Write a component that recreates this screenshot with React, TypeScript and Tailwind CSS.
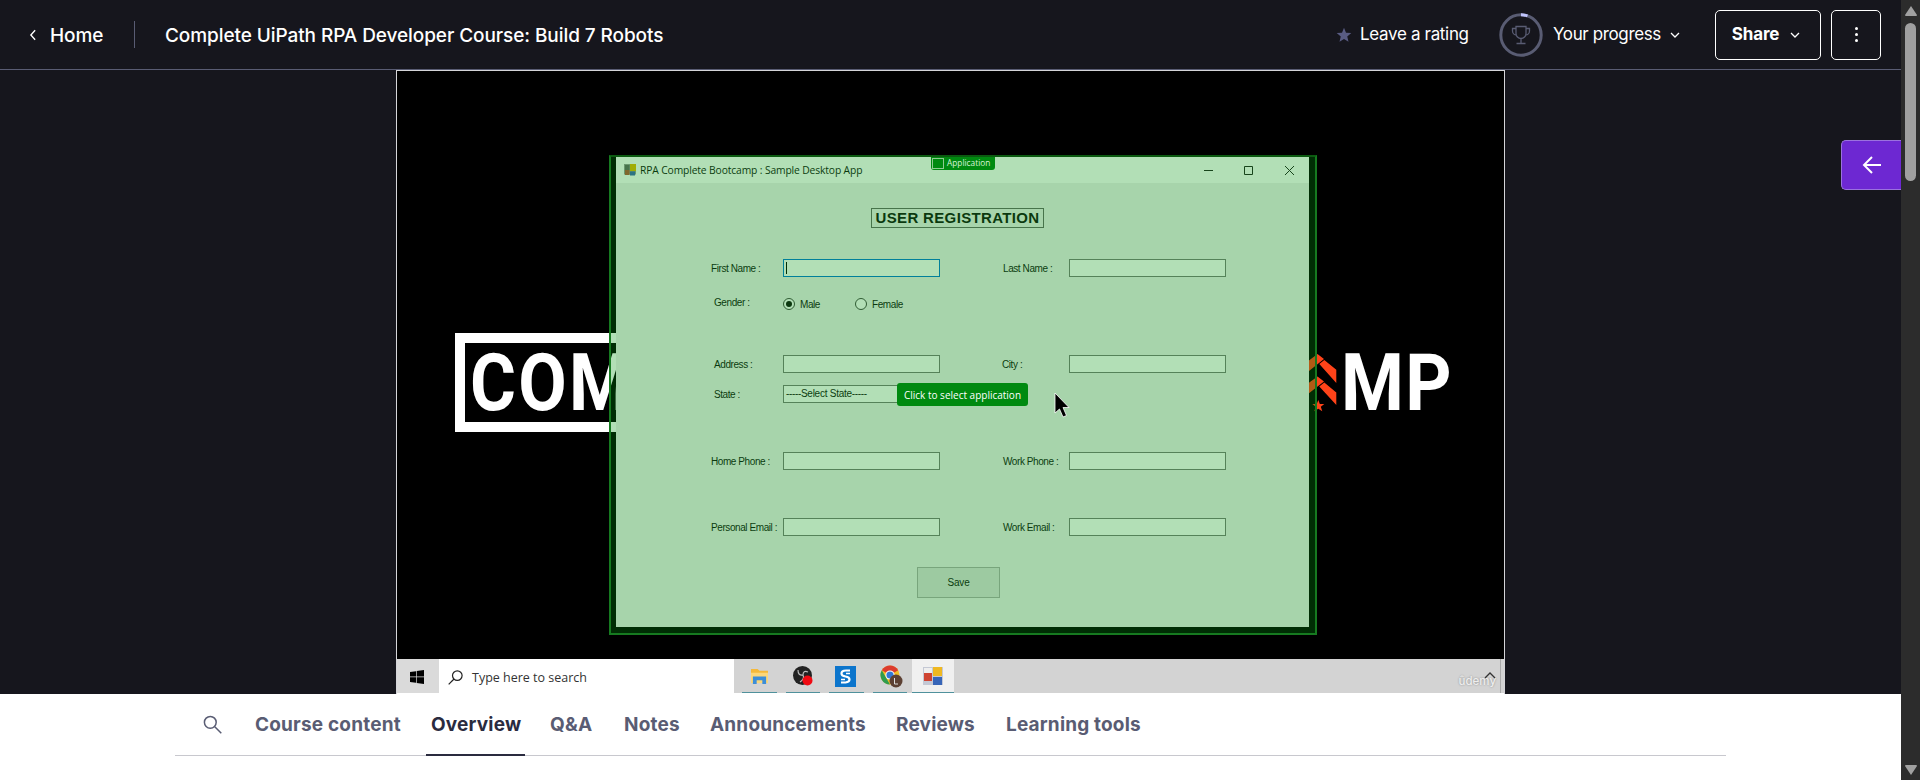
import React from "react";

const ui = "font-['Inter','Liberation_Sans',sans-serif]";

function Chevron({ className }: { className?: string }) {
  return (
    <svg viewBox="0 0 10 10" className={className} fill="none" stroke="currentColor" strokeWidth="1.3">
      <path d="M1 3l4 4 4-4" />
    </svg>
  );
}

function Header() {
  return (
    <header className="flex h-[70px] shrink-0 items-center border-b border-[#595c73] text-[18px] font-medium whitespace-nowrap text-white">
      <svg viewBox="0 0 10 14" className="ml-7 h-3 w-2.5 shrink-0" fill="none" stroke="currentColor" strokeWidth="1.6">
        <path d="M7.5 1.5L2.500 7l5 5.500" />
      </svg>
      <span className="ml-3 w-[54px] pt-[3px] text-[19px] tracking-[-0.05px]">Home</span>
      <div className="ml-[30px] h-[27px] w-px bg-[#595c73]" />
      <h1 className="ml-[30px] pt-[3px] text-[19px] tracking-[-0.080px]">Complete UiPath RPA Developer Course: Build 7 Robots</h1>
      <div className="ml-auto flex items-center pr-5">
        <svg viewBox="0 0 16 16" className="mr-2 h-4 w-4" fill="#595c83">
          <path d="M8 .8l2 4.900 5.300.4-4.050 3.400L12.500 14.700 8 11.900l-4.500 2.800 1.250-5.200L.7 6.100l5.300-.4z" />
        </svg>
        <span className="w-[109px] text-[17px] font-normal tracking-[-0.33px]">Leave a rating</span>
        <svg viewBox="0 0 44 44" className="ml-[30px] h-11 w-11" fill="none">
          <circle cx="22" cy="22" r="20.200" stroke="#595c73" strokeWidth="3" />
          <path d="M22 1.800a20.200 20.200 0 0 1 6.500 1.100" stroke="#c0c4fc" strokeWidth="3" />
          <g stroke="#595c73" strokeWidth="1.300">
            <path d="M17 13.500h10v7a5 5 0 0 1-10 0zM17 15.500h-3.500v2.500a4 4 0 0 0 4 4M27 15.500h3.500v2.500a4 4 0 0 1-4 4M22 25.500v4.500M17.500 30.500h9" />
          </g>
        </svg>
        <span className="ml-2.5 w-[108px] text-[17px] font-normal tracking-[-0.38px]">Your progress</span>
        <Chevron className="ml-[9px] h-2.5 w-2.5" />
        <button className="ml-[35px] flex h-[50px] w-[106px] items-center rounded-[5px] border border-white pl-[14px] text-[17px] font-bold">
          <span className="w-[51px] tracking-[-0.1px]">Share</span>
          <Chevron className="ml-[9px] h-2.5 w-2.5" />
        </button>
        <button className="ml-2.5 flex h-[50px] w-[50px] flex-col items-center justify-center gap-[3px] rounded-[5px] border border-white">
          <i className="h-[3px] w-[3px] rounded-full bg-white" />
          <i className="h-[3px] w-[3px] rounded-full bg-white" />
          <i className="h-[3px] w-[3px] rounded-full bg-white" />
        </button>
      </div>
    </header>
  );
}

function Label({ children, className }: { children: React.ReactNode; className: string }) {
  return <span className={`shrink-0 whitespace-nowrap pt-px text-[10px] tracking-[-0.420px] ${className}`}>{children}</span>;
}

const field = "h-[18px] w-[157px] shrink-0 border bg-white";

function Row({ left, right, className, inset, rightInset, focused }: { left: string; right?: string; className: string; inset?: boolean; rightInset?: boolean; focused?: boolean }) {
  return (
    <div className={`flex h-[18px] items-center pl-[95px] ${className}`}>
      <Label className={inset ? "w-[72px] pl-[3px]" : "w-[72px]"}>{left}</Label>
      <div className={`${field} ${focused ? "border-[#0078d7]" : "border-[#7a7a7a]"} flex items-center pl-0.5`}>
        {focused && <i className="h-3 w-px bg-black" />}
      </div>
      {right && (
        <>
          <Label className={rightInset ? "ml-[62px] w-[67px]" : "ml-[63px] w-[66px]"}>{right}</Label>
          <div className={`${field} border-[#7a7a7a]`} />
        </>
      )}
    </div>
  );
}

function AppWindow() {
  return (
    <div className="absolute top-[84px] left-[212px] h-[479px] w-[708px] pt-0.5 pl-[7px]">
      <div className="h-[470px] w-[693px] bg-[#f0f0f0] font-['Liberation_Sans',Arial,sans-serif] font-normal text-[#111]">
        <div className="flex h-[26px] items-center bg-white pb-px pl-2">
          <svg viewBox="0 0 12 12" className="h-3 w-3 shrink-0">
            <rect width="12" height="10.500" fill="#999" />
            <rect x="1" y="1" width="4.500" height="5" fill="#666" />
            <rect x="6" width="6" height="7" fill="#e5b800" />
            <rect x="1" y="6" width="4.500" height="5" fill="#b8553b" />
            <rect x="6" y="7.500" width="5" height="4" fill="#3f66b5" />
          </svg>
          <span className="ml-1 pt-0.5 font-['Open_Sans',sans-serif] text-[10.300px] whitespace-nowrap tracking-[-0.130px]">RPA Complete Bootcamp : Sample Desktop App</span>
          <svg viewBox="0 0 92 12" className="mr-[14px] ml-auto h-3 w-[92px]" fill="none" stroke="#222" strokeWidth="1">
            <path d="M1 6.500h9M41.500 2.500h8v8h-8zM82 2l9 9M91 2l-9 9" />
          </svg>
        </div>
        <h2 className="mt-[25px] ml-[255px] flex h-5 w-[173px] items-center justify-center border border-[#666] text-[15px] leading-[18px] font-bold whitespace-nowrap tracking-[0.350px]">USER REGISTRATION</h2>
        <Row left="First Name :" right="Last Name :" className="mt-[31px]" focused />
        <div className="mt-[18px] flex h-[18px] items-center pl-[98px]">
          <Label className="w-[69px] pb-[3px]">Gender :</Label>
          <i className="flex h-3 w-3 items-center justify-center rounded-full border border-[#444] bg-white">
            <i className="h-1.5 w-1.5 rounded-full bg-[#111]" />
          </i>
          <Label className="ml-[5px] w-[55px]">Male</Label>
          <i className="h-3 w-3 rounded-full border border-[#444] bg-white" />
          <Label className="ml-[5px]">Female</Label>
        </div>
        <Row left="Address :" right="City :" className="mt-[42px]" inset rightInset />
        <div className="mt-3 flex h-[18px] items-center pl-[95px]">
          <Label className="w-[72px] pl-[3px]">State :</Label>
          <div className={`${field} flex items-center border-[#7a7a7a] bg-[#f0f0f0] pl-0.5 text-[10px]`}>
            <span className="tracking-[-0.350px]">-----</span>
            <span className="tracking-[-0.250px]">Select State</span>
            <span className="tracking-[-0.350px]">-----</span>
          </div>
        </div>
        <Row left="Home Phone :" right="Work Phone :" className="mt-[49px]" />
        <Row left="Personal Email :" right="Work Email :" className="mt-12" />
        <button className="mt-[31px] ml-[301px] flex h-[31px] w-[83px] items-center justify-center border border-[#adadad] bg-[#e1e1e1] text-[10px] tracking-[-0.2px]">Save</button>
      </div>
    </div>
  );
}

function Selection() {
  return (
    <>
      <div className="absolute top-[84px] left-[212px] h-[480px] w-[708px] border-2 border-[#167a20] border-t-[#0b5a10] bg-[#00940c]/30" />
      <div className="absolute top-[86px] left-[534px] flex h-[13px] w-[64px] items-center rounded-b-[3px] bg-[#008a10] pl-[1px] font-['Open_Sans',sans-serif] text-[8.300px] font-normal text-[#d9f3da]">
        <i className="mr-[3px] h-[11px] w-3 shrink-0 border border-[#8ecb90]" />
        Application
      </div>
      <div className="absolute top-[312px] left-[500px] flex h-[23px] w-[131px] items-center justify-center rounded-[3px] bg-[#008a10] font-['Open_Sans',sans-serif] text-[10px] font-normal whitespace-nowrap text-white">
        Click to select application
      </div>
      <svg viewBox="0 0 16 26" className="absolute top-[321px] left-[657px] h-[26px] w-4" stroke="#fff" strokeWidth=".8">
        <path d="M1 1v20l4.500-4 3.500 8 3.500-1.500L9 15.500h6z" />
      </svg>
    </>
  );
}

function Desktop() {
  return (
    <div className="relative h-[588px] overflow-hidden bg-black font-['Roboto',sans-serif] text-[79px] leading-none font-bold text-white">
      <div className="absolute top-[262px] left-[58px] h-[99px] w-[300px] border-[10px] border-white" />
      <div className="absolute top-[273px] left-[73px] origin-left scale-x-[0.89] tracking-[2.500px]">COM</div>
      <div className="absolute top-[273px] left-[944px] origin-left scale-x-[0.91] tracking-[1.500px]">MP</div>
      <svg viewBox="0 0 56 60" className="absolute top-[283px] left-[892px] h-[60px] w-14" fill="#ff4319">
        <path d="M28.500 0l6.500 5L10 25V14zM30.300 10l5-4 12 9.700V29zM28.500 22.500l6.500 5L10 47V36zM30.300 32.500l5-4 12 10V51z" />
        <path d="M29.300 46l1.500 4h4.500l-3.500 2.800 1.500 4.500-4-2.600-4 2.600 1.500-4.500-3.500-2.800h4.500z" />
      </svg>
      <AppWindow />
      <Selection />
    </div>
  );
}

function Task({ children, className }: { children: React.ReactNode; className: string }) {
  return <div className={`flex h-[34px] shrink-0 items-center justify-center border-b border-[#4f919c] pt-px ${className}`}>{children}</div>;
}

function Taskbar() {
  return (
    <div className="relative flex h-[34px] items-center bg-[#d3d3d3] text-[#333]">
      <div className="flex h-full w-[42px] items-center justify-center bg-[#dadada] pt-px pr-0.5">
        <svg viewBox="0 0 14 14" className="h-3.5 w-3.5" fill="#000">
          <path d="M0 2l6-.8v5.400H0zM6.700 1.100L14 0v6.600H6.700zM0 7.300h6v5.400L0 12zM6.700 7.300H14V14l-7.300-1z" />
        </svg>
      </div>
      <div className="flex h-full w-[295px] items-center bg-white pt-0.5 pl-[9px]">
        <svg viewBox="0 0 15 15" className="h-[15px] w-[15px]" fill="none" stroke="#222" strokeWidth="1.200">
          <circle cx="9.300" cy="5.600" r="4.800" />
          <path d="M6 9L.7 14.400" />
        </svg>
        <span className="ml-[9px] pt-0.5 font-['Open_Sans',sans-serif] text-[12.500px] whitespace-nowrap">Type here to search</span>
      </div>
      <Task className="ml-2 w-[35px]">
        <svg viewBox="0 0 20 18" className="mr-[1px] h-[17px] w-[19px]">
          <path d="M1 1h7l2 2h9v13H1z" fill="#f5b93a" />
          <path d="M1 5h18v11H1z" fill="#fcd77a" />
          <path d="M3 17V9h14v8h-4v-4H7v4z" fill="#3d8ed8" />
        </svg>
      </Task>
      <Task className="ml-[9px] w-[34px]">
        <svg viewBox="0 0 20 20" className="h-5 w-5">
          <circle cx="9.500" cy="9.500" r="9.500" fill="#222" />
          <path d="M5 4q0 6 5 5M15 6q-5-2-5 3M10 9q2 4-3 7" fill="none" stroke="#bbb" strokeWidth="1.200" />
          <circle cx="14.500" cy="14.500" r="5" fill="#f00a12" />
        </svg>
      </Task>
      <Task className="ml-[9px] w-[35px]">
        <svg viewBox="0 0 21 21" className="mr-0.5 h-[21px] w-[21px]">
          <rect width="21" height="21" fill="#0c75cc" />
          <path d="M15 4.500h-4Q6.500 4.500 6.500 7.300T10.500 10.500Q14.500 11 14.500 13.500T10.500 16.500H6" fill="none" stroke="#fff" strokeWidth="2.200" />
          <path d="M11 7.500h4M6 13.500h4" fill="none" stroke="#fff" strokeWidth="1.400" />
        </svg>
      </Task>
      <Task className="ml-[9px] w-[34px]">
        <svg viewBox="0 0 23 23" className="ml-0.5 h-[23px] w-[23px]">
          <circle cx="10" cy="10" r="9.500" fill="#f3bd24" />
          <path d="M10 10L1.800 5.200A9.500 9.500 0 0 1 18.200 5.200z" fill="#dc3b2e" />
          <path d="M1.800 5.200L10 19.500A9.500 9.500 0 0 1 1.800 5.200z" fill="#2f9c4e" />
          <circle cx="10" cy="10" r="4.600" fill="#fff" />
          <circle cx="10" cy="10" r="3.600" fill="#3478d4" />
          <circle cx="16" cy="16" r="6.500" fill="#5c4033" />
          <path d="M14.500 13v6h3.500" fill="none" stroke="#ddd" />
        </svg>
      </Task>
      <Task className="ml-[5px] w-[42px] bg-[#f0f0f0]">
        <svg viewBox="0 0 20 18" className="h-[18px] w-5">
          <rect width="20" height="18" fill="#c4c8d4" />
          <rect x="1" y="1" width="8" height="6" fill="#eee" />
          <rect x="10" width="9" height="9" fill="#efb821" />
          <rect x="1" y="6" width="8" height="8" fill="#cf4432" />
          <rect x="10" y="10" width="9" height="8" fill="#3765b8" />
        </svg>
      </Task>
      <div className="absolute right-[3px] bottom-0 h-[34px] w-px bg-[#aaa]" />
      <span className="absolute right-[8px] bottom-[3px] text-[11.500px] font-medium text-[#eee] [text-shadow:0_0_2px_#888]">ûdemy</span>
      <svg viewBox="0 0 12 7" className="absolute right-2 bottom-[14px] h-[7px] w-3" fill="none" stroke="#333" strokeWidth="1.300">
        <path d="M1 6l5-5 5 5" />
      </svg>
    </div>
  );
}

const tabs = [
  { name: "Course content", size: "w-[146px]" },
  { name: "Overview", size: "w-[89px]", active: true },
  { name: "Q&A", size: "w-[44px]" },
  { name: "Notes", size: "w-[56px]" },
  { name: "Announcements", size: "w-[156px]" },
  { name: "Reviews", size: "w-[80px]" },
  { name: "Learning tools", size: "w-[137px]" },
];

function Tabs() {
  return (
    <nav className="h-[86px] bg-white pr-[175px] pl-[175px]">
      <div className="flex h-[62px] items-stretch border-b border-[#c8c8ce]">
        <svg viewBox="0 0 20 20" className="mt-[21px] mr-[27px] ml-7 h-5 w-5 shrink-0" fill="none" stroke="#595c73" strokeWidth="1.500">
          <circle cx="7.300" cy="7.300" r="5.900" />
          <path d="M11.800 11.800l6.500 6.500" />
        </svg>
        {tabs.map((t) => (
          <div
            key={t.name}
            className={`mr-5 box-content h-[60px] px-[5px] text-[19px] leading-[61px] font-bold tracking-[0.180px] whitespace-nowrap ${t.size} ${t.active ? "border-b-2 border-[#2a2b3f] text-[#2a2b3f]" : "text-[#595c73]"}`}
          >
            {t.name}
          </div>
        ))}
      </div>
    </nav>
  );
}

export default function App() {
  return (
    <div className={`flex h-[780px] w-full overflow-hidden bg-[#16161d] ${ui}`}>
      <div className="relative flex min-w-0 flex-1 flex-col">
        <Header />
        <main className="mx-auto h-[624px] w-[1109px] shrink-0 border-x border-t border-[#d5d5d9] bg-white">
          <Desktop />
          <Taskbar />
        </main>
        <Tabs />
        <button className="absolute top-[140px] right-0 flex h-[50px] w-[60px] items-center justify-center rounded-l-[5px] border border-r-0 border-[#9b72de] bg-[#6d28d2]">
          <svg viewBox="0 0 20 20" className="h-5 w-5" fill="none" stroke="#fff" strokeWidth="2">
            <path d="M10 2L2 10l8 8M2 10h17" />
          </svg>
        </button>
      </div>
      <div className="flex w-[19px] shrink-0 flex-col items-center bg-[#2c2c2c]">
        <svg viewBox="0 0 12 10" className="mt-1.5 h-2.5 w-3" fill="#a0a0a0">
          <path d="M6 0l6 9q0 1-1 1H1q-1 0-1-1z" />
        </svg>
        <div className="mt-[7px] h-[158px] w-[11px] rounded-full bg-[#a0a0a0]" />
        <svg viewBox="0 0 12 10" className="mt-auto mb-[5px] h-2.5 w-3" fill="#a0a0a0">
          <path d="M6 10L0 1q0-1 1-1h10q1 0 1 1z" />
        </svg>
      </div>
    </div>
  );
}
